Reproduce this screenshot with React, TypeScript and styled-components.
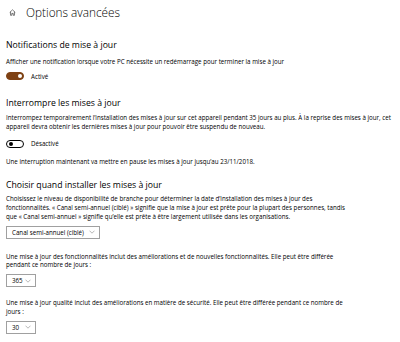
import React from "react";
import styled, { createGlobalStyle } from "styled-components";

const Global = createGlobalStyle`
  html, body { margin: 0; padding: 0; background: #ffffff; }
  body { font-family: "Open Sans", "Noto Sans", sans-serif; color: #000; }
`;

const Page = styled.div`
  width: 400px;
  height: 342px;
  overflow: hidden;
  box-sizing: border-box;
  padding: 4px 6px 0 6px;
  display: flex;
  flex-direction: column;
`;

const TitleRow = styled.div`
  display: flex;
  align-items: center;
  gap: 10px;
  padding-left: 3px;
  height: 17px;
`;

const Title = styled.h1`
  margin: 0;
  font-size: 11.8px;
  font-weight: 300;
  line-height: 17px;
`;

const Section = styled.section<{ $top: number }>`
  margin-top: ${(p) => p.$top}px;
  display: flex;
  flex-direction: column;
`;

const Heading = styled.h2`
  margin: 0;
  font-size: 8.7px;
  font-weight: 400;
  line-height: 12px;
`;

const Text = styled.p<{ $top?: number }>`
  margin: ${(p) => p.$top ?? 0}px 0 0 0;
  font-size: 6.2px;
  line-height: 8.8px;
  white-space: nowrap;
`;

const ToggleRow = styled.div<{ $top: number }>`
  margin-top: ${(p) => p.$top}px;
  display: flex;
  align-items: center;
  gap: 7px;
  font-size: 6.2px;
  height: 9px;
`;

const Track = styled.span<{ $on: boolean }>`
  box-sizing: border-box;
  width: 18px;
  height: 8px;
  border-radius: 4px;
  display: flex;
  align-items: center;
  padding: 0 1.5px;
  justify-content: ${(p) => (p.$on ? "flex-end" : "flex-start")};
  background: ${(p) => (p.$on ? "#7e4113" : "#fff")};
  border: 1px solid ${(p) => (p.$on ? "#7e4113" : "#000")};
`;

const Knob = styled.span<{ $on: boolean }>`
  width: 4px;
  height: 4px;
  border-radius: 50%;
  background: ${(p) => (p.$on ? "#fff" : "#000")};
`;

const Select = styled.div<{ $w: number; $top: number }>`
  box-sizing: border-box;
  margin-top: ${(p) => p.$top}px;
  width: ${(p) => p.$w}px;
  height: 13px;
  border: 1px solid #a0a0a0;
  display: flex;
  align-items: center;
  justify-content: space-between;
  padding: 0 4px 0 5px;
  font-size: 6.2px;
  color: #000;
`;

const Chevron = () => (
  <svg width="6" height="4" viewBox="0 0 6 4">
    <path d="M0.5 0.7 L3 3.2 L5.5 0.7" fill="none" stroke="#888" strokeWidth="0.6" />
  </svg>
);

const HomeIcon = () => (
  <svg width="7" height="7" viewBox="0 0 10 10">
    <path
      d="M1 5 L5 1.2 L9 5 M2.2 4 V9 H4 V6.3 H6 V9 H7.8 V4"
      fill="none"
      stroke="#333"
      strokeWidth="0.9"
    />
  </svg>
);

const Toggle = ({ on, label, top }: { on: boolean; label: string; top: number }) => (
  <ToggleRow $top={top}>
    <Track $on={on}>
      <Knob $on={on} />
    </Track>
    <span>{label}</span>
  </ToggleRow>
);

export default function App() {
  return (
    <>
      <Global />
      <Page>
        <TitleRow>
          <HomeIcon />
          <Title>Options avancées</Title>
        </TitleRow>

        <Section $top={18}>
          <Heading>Notifications de mise à jour</Heading>
          <Text $top={7}>
            Afficher une notification lorsque votre PC nécessite un redémarrage pour terminer la mise à jour
          </Text>
          <Toggle on label="Activé" top={5} />
        </Section>

        <Section $top={16}>
          <Heading>Interrompre les mises à jour</Heading>
          <Text $top={5}>
            Interrompez temporairement l’installation des mises à jour sur cet appareil pendant 35 jours au plus. À la reprise des mises à jour, cet
            <br />
            appareil devra obtenir les dernières mises à jour pour pouvoir être suspendu de nouveau.
          </Text>
          <Toggle on={false} label="Désactivé" top={8} />
          <Text $top={10}>
            Une interruption maintenant va mettre en pause les mises à jour jusqu’au 23/11/2018.
          </Text>
        </Section>

        <Section $top={12}>
          <Heading>Choisir quand installer les mises à jour</Heading>
          <Text $top={4}>
            Choisissez le niveau de disponibilité de branche pour déterminer la date d’installation des mises à jour des
            <br />
            fonctionnalités. « Canal semi-annuel (ciblé) » signifie que la mise à jour est prête pour la plupart des personnes, tandis
            <br />
            que « Canal semi-annuel » signifie qu’elle est prête à être largement utilisée dans les organisations.
          </Text>
          <Select $w={94} $top={4}>
            <span>Canal semi-annuel (ciblé)</span>
            <Chevron />
          </Select>
          <Text $top={14}>
            Une mise à jour des fonctionnalités inclut des améliorations et de nouvelles fonctionnalités. Elle peut être différée
            <br />
            pendant ce nombre de jours :
          </Text>
          <Select $w={30} $top={4}>
            <span>365</span>
            <Chevron />
          </Select>
          <Text $top={12}>
            Une mise à jour qualité inclut des améliorations en matière de sécurité. Elle peut être différée pendant ce nombre de
            <br />
            jours :
          </Text>
          <Select $w={30} $top={4}>
            <span>30</span>
            <Chevron />
          </Select>
        </Section>
      </Page>
    </>
  );
}
